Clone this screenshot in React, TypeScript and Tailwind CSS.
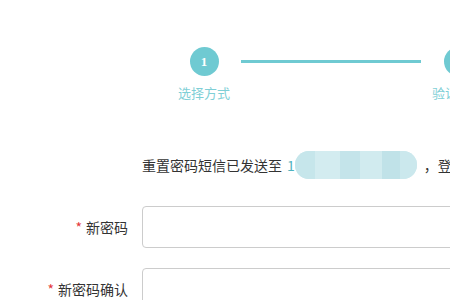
export default function App() {
  return (
    <div
      className="w-[450px] h-[300px] overflow-hidden bg-white"
      style={{ fontFamily: '"Noto Sans CJK SC", "Noto Sans", sans-serif' }}
    >
      <div className="pt-[47px] pl-[176px] flex items-start">
        <div className="w-[56px] shrink-0 flex flex-col items-center">
          <div className="w-[29px] h-[29px] rounded-full bg-[#6fcad2] text-white flex items-center justify-center text-[13px] font-bold" style={{ fontFamily: '"Liberation Serif", serif' }}>
            1
          </div>
          <div className="mt-[8px] text-[13px] leading-[18px] text-[#7fcfd6] whitespace-nowrap">选择方式</div>
        </div>
        <div className="ml-[9px] mt-[13px] w-[180px] h-[3px] bg-[#6fcad2] shrink-0" />
        <div className="ml-[9px] w-[56px] shrink-0 flex flex-col items-center">
          <div className="w-[29px] h-[29px] rounded-full bg-[#6fcad2] text-white flex items-center justify-center text-[13px] font-bold" style={{ fontFamily: '"Liberation Serif", serif' }}>
            2
          </div>
          <div className="mt-[8px] text-[13px] leading-[18px] text-[#7fcfd6] whitespace-nowrap">验证身份</div>
        </div>
      </div>

      <div className="mt-[53px] pl-[142px] h-[20px] flex items-center text-[14px] leading-[20px] text-[#333] whitespace-nowrap">
        <span>重置密码短信已发送至</span>
        <span className="ml-[5px] text-[#4fb3bf]">1</span>
        <span className="ml-[0px] shrink-0 w-[122px] h-[28px] rounded-full bg-[#cde9ee] flex overflow-hidden">
          <span className="w-[20px] h-full bg-[#c6e6eb]" />
          <span className="w-[25px] h-full bg-[#d3ecf0]" />
          <span className="w-[20px] h-full bg-[#c4e4ea]" />
          <span className="w-[22px] h-full bg-[#d1ebef]" />
          <span className="w-[18px] h-full bg-[#c0e2e8]" />
          <span className="w-[17px] h-full bg-[#cbe8ed]" />
        </span>
        <span className="ml-[7px]">，登录</span>
      </div>

      <div className="mt-[31px] flex items-center h-[42px]">
        <div className="w-[128px] shrink-0 text-right text-[14px] text-[#333] whitespace-nowrap">
          <span className="text-[#e4393c] mr-[4px]">*</span>新密码
        </div>
        <div className="ml-[14px] w-[400px] shrink-0 h-[42px] border border-[#ccc] rounded-[4px]" />
      </div>

      <div className="mt-[20px] flex items-center h-[42px]">
        <div className="w-[128px] shrink-0 text-right text-[14px] text-[#333] whitespace-nowrap">
          <span className="text-[#e4393c] mr-[4px]">*</span>新密码确认
        </div>
        <div className="ml-[14px] w-[400px] shrink-0 h-[42px] border border-[#ccc] rounded-[4px]" />
      </div>
    </div>
  );
}
